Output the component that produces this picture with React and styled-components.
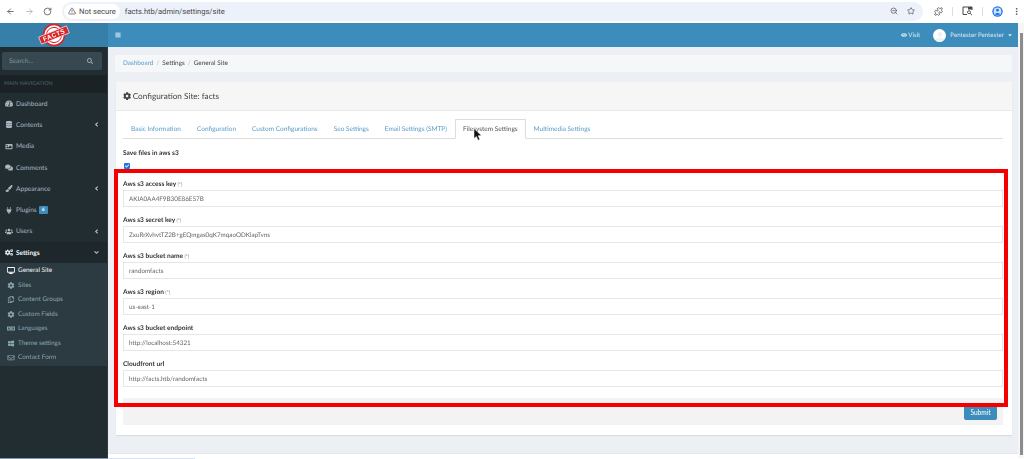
import React from "react";
import styled, { createGlobalStyle } from "styled-components";
import {
  FaTachometerAlt,
  FaDatabase,
  FaImage,
  FaComments,
  FaPaintBrush,
  FaPlug,
  FaUsers,
  FaCogs,
  FaDesktop,
  FaCog,
  FaRegCopy,
  FaLanguage,
  FaWindows,
  FaRegEnvelope,
  FaBars,
  FaEye,
  FaSearch,
  FaAngleLeft,
  FaAngleDown,
  FaCaretDown,
  FaUser,
  FaCheck,
} from "react-icons/fa";
import {
  LuArrowLeft,
  LuArrowRight,
  LuRotateCw,
  LuTriangleAlert,
  LuZoomOut,
  LuStar,
  LuPuzzle,
  LuEllipsisVertical,
} from "react-icons/lu";

const GlobalStyle = createGlobalStyle`
  html, body {
    margin: 0;
    padding: 0;
    background: #fff;
    overflow: hidden;
  }
  * { box-sizing: border-box; }
`;

const navItems = [
  { icon: FaTachometerAlt, label: "Dashboard" },
  { icon: FaDatabase, label: "Contents", arrow: true },
  { icon: FaImage, label: "Media" },
  { icon: FaComments, label: "Comments" },
  { icon: FaPaintBrush, label: "Appearance", arrow: true },
  { icon: FaPlug, label: "Plugins", badge: "6" },
  { icon: FaUsers, label: "Users", arrow: true },
  { icon: FaCogs, label: "Settings", active: true, open: true },
];

const subItems = [
  { icon: FaDesktop, label: "General Site", active: true },
  { icon: FaCog, label: "Sites" },
  { icon: FaRegCopy, label: "Content Groups" },
  { icon: FaCog, label: "Custom Fields" },
  { icon: FaLanguage, label: "Languages" },
  { icon: FaWindows, label: "Theme settings" },
  { icon: FaRegEnvelope, label: "Contact Form" },
];

const tabs = [
  "Basic Information",
  "Configuration",
  "Custom Configurations",
  "Seo Settings",
  "Email Settings (SMTP)",
  "Filesystem Settings",
  "Multimedia Settings",
];

const fields = [
  { label: "Aws s3 access key", value: "AKIA0AA4F9B30E86E57B", required: true },
  { label: "Aws s3 secret key", value: "ZxuRrXvhvtTZ2B+gEQmgas0qK7mqaoODKlapTvns", required: true },
  { label: "Aws s3 bucket name", value: "randomfacts", required: true },
  { label: "Aws s3 region", value: "us-east-1", required: true },
  { label: "Aws s3 bucket endpoint", value: "http://localhost:54321" },
  { label: "Cloudfront url", value: "http://facts.htb/randomfacts" },
];

const Logo = () => (
  <svg width="32" height="24" viewBox="0 0 32 24">
    <circle cx="16" cy="12" r="10.5" fill="#fff" stroke="#d8232a" strokeWidth="1.6" />
    <circle cx="16" cy="12" r="7.6" fill="none" stroke="#d8232a" strokeWidth="1" />
    <g transform="rotate(-22 16 12)">
      <rect x="1" y="8.2" width="30" height="7.6" fill="#d8232a" stroke="#fff" strokeWidth="0.6" />
      <text
        x="16"
        y="14.2"
        textAnchor="middle"
        fontFamily="Liberation Sans, sans-serif"
        fontWeight="700"
        fontSize="6.4"
        letterSpacing="0.5"
        fill="#fff"
      >
        FACTS
      </text>
    </g>
  </svg>
);

const Cursor = () => (
  <svg width="9" height="13" viewBox="0 0 9 13">
    <path d="M1 0.5 L1 10.5 L3.4 8.4 L5 12.2 L6.8 11.4 L5.2 7.8 L8.4 7.6 Z" fill="#111" stroke="#fff" strokeWidth="0.5" />
  </svg>
);

const ProfileIcon = () => (
  <svg width="11" height="11" viewBox="0 0 11 11">
    <circle cx="5.5" cy="5.5" r="5.2" fill="#1a73e8" />
    <circle cx="5.5" cy="5.5" r="3.9" fill="#d6e4fb" />
    <circle cx="5.5" cy="4.2" r="1.4" fill="#1a73e8" />
    <path d="M2.9 8.2 C3.6 6.5 7.4 6.5 8.1 8.2 C7 9.3 4 9.3 2.9 8.2 Z" fill="#1a73e8" />
  </svg>
);

const SidePanelIcon = () => (
  <svg width="11" height="10" viewBox="0 0 11 10" fill="none" stroke="#474747">
    <path d="M5 8.5 H1 V1 H10 V4" strokeWidth="1" />
    <rect x="6" y="1" width="4" height="2.5" fill="#474747" stroke="none" />
    <circle cx="7" cy="6.2" r="1.5" strokeWidth="0.9" />
    <path d="M8.2 7.4 L10 9.2" strokeWidth="0.9" />
  </svg>
);

export default function App() {
  return (
    <Page>
      <GlobalStyle />
      <BrowserBar>
        <BarIcon $left={2} $color="#474747"><LuArrowLeft /></BarIcon>
        <BarIcon $left={10} $color="#a9a9a9"><LuArrowRight /></BarIcon>
        <BarIcon $left={9} $color="#474747"><LuRotateCw /></BarIcon>
        <Omnibox>
          <SecureChip>
            <LuTriangleAlert />
            Not secure
          </SecureChip>
          <Url>facts.htb/admin/settings/site</Url>
          <OmniIcons>
            <LuZoomOut />
            <LuStar />
          </OmniIcons>
        </Omnibox>
        <BarActions>
          <LuPuzzle />
          <Divider />
          <SidePanelIcon />
          <Divider />
          <ProfileIcon />
          <LuEllipsisVertical />
        </BarActions>
      </BrowserBar>

      <Viewport>
        <AppColumn>
          <TopBar>
            <LogoBox><Logo /></LogoBox>
            <Navbar>
              <FaBars />
              <NavRight>
                <VisitLink><FaEye />Visit</VisitLink>
                <Avatar><FaUser /></Avatar>
                <UserName>Pentester Pentester</UserName>
                <FaCaretDown />
              </NavRight>
            </Navbar>
          </TopBar>

          <Body>
            <Sidebar>
              <SearchStrip>
                <SearchBox>
                  Search...
                  <FaSearch />
                </SearchBox>
              </SearchStrip>
              <NavHeader>MAIN NAVIGATION</NavHeader>
              {navItems.map(({ icon: Icon, label, arrow, badge, active, open }) => (
                <NavItem key={label} $active={active}>
                  <Icon />
                  <span>{label}</span>
                  {badge && <Badge>{badge}</Badge>}
                  {arrow && <Arrow><FaAngleLeft /></Arrow>}
                  {open && <Arrow><FaAngleDown /></Arrow>}
                </NavItem>
              ))}
              <SubMenu>
                {subItems.map(({ icon: Icon, label, active }) => (
                  <SubItem key={label} $active={active}>
                    <Icon />
                    <span>{label}</span>
                  </SubItem>
                ))}
              </SubMenu>
            </Sidebar>

            <Main>
              <Content>
                <Breadcrumb>
                  <CrumbLink>Dashboard</CrumbLink>
                  <CrumbSep>/</CrumbSep>
                  <span>Settings</span>
                  <CrumbSep>/</CrumbSep>
                  <span>General Site</span>
                </Breadcrumb>

                <Panel>
                  <PanelHeading>
                    <FaCog />
                    Configuration Site: facts
                  </PanelHeading>
                  <PanelBody>
                    <TabList>
                      {tabs.map((tab, i) => (
                        <Tab key={tab} $active={i === 5}>{tab}</Tab>
                      ))}
                    </TabList>
                    <CheckGroup>
                      <FieldLabel>Save files in aws s3</FieldLabel>
                      <CheckBox><FaCheck /></CheckBox>
                    </CheckGroup>
                    {fields.map((field) => (
                      <FieldGroup key={field.label}>
                        <FieldLabel>
                          {field.label}
                          {field.required && <Required> (*)</Required>}
                        </FieldLabel>
                        <TextField>{field.value}</TextField>
                      </FieldGroup>
                    ))}
                    <FormFooter>
                      <SubmitButton>Submit</SubmitButton>
                    </FormFooter>
                  </PanelBody>
                </Panel>
              </Content>
              <MainFooter />
            </Main>
          </Body>
        </AppColumn>
        <Scrollbar>
          <ScrollThumb />
        </Scrollbar>
      </Viewport>

      <BottomStrip>
        <StripDark />
        <StripLight />
      </BottomStrip>

      <Highlight />
      <CursorMark><Cursor /></CursorMark>
    </Page>
  );
}

const Page = styled.div`
  position: relative;
  display: flex;
  flex-direction: column;
  width: 1024px;
  height: 459px;
  overflow: hidden;
  font-family: "Lato", "Noto Sans", sans-serif;
  color: #333;
  text-rendering: geometricPrecision;
  filter: blur(0.3px);
`;

const BrowserBar = styled.div`
  display: flex;
  align-items: center;
  height: 23px;
  padding: 0 0 1px 4px;
  background: #fff;
  flex: none;
`;

const BarIcon = styled.span`
  display: flex;
  margin-left: ${(p) => p.$left}px;
  color: ${(p) => p.$color};
  font-size: 9px;
`;

const Omnibox = styled.div`
  display: flex;
  align-items: center;
  width: 861px;
  height: 19px;
  margin-left: 10px;
  padding: 0 6px 0 2px;
  border-radius: 10px;
  background: #edf2fa;
`;

const SecureChip = styled.div`
  display: flex;
  align-items: center;
  gap: 3px;
  height: 15px;
  padding: 0 4px;
  border-radius: 8px;
  background: #fff;
  font-family: "Roboto", sans-serif;
  font-size: 7.6px;
  color: #474747;
  svg { font-size: 8px; }
`;

const Url = styled.span`
  margin-left: 5px;
  font-family: "Roboto", sans-serif;
  font-size: 7.6px;
  color: #474747;
`;

const OmniIcons = styled.div`
  display: flex;
  gap: 9px;
  margin-left: auto;
  padding-right: 2px;
  color: #474747;
  font-size: 8px;
`;

const BarActions = styled.div`
  display: flex;
  align-items: center;
  gap: 9px;
  margin-left: 11px;
  color: #474747;
  font-size: 9px;
`;

const Divider = styled.span`
  width: 1px;
  height: 9px;
  background: #d5dfee;
`;

const Viewport = styled.div`
  display: flex;
  flex: 1;
  min-height: 0;
`;

const AppColumn = styled.div`
  display: flex;
  flex-direction: column;
  flex: 1;
  min-width: 0;
`;

const TopBar = styled.header`
  display: flex;
  height: 24px;
  flex: none;
`;

const LogoBox = styled.div`
  display: flex;
  align-items: center;
  justify-content: center;
  width: 108px;
  background: #367fa9;
`;

const Navbar = styled.div`
  display: flex;
  align-items: center;
  justify-content: space-between;
  flex: 1;
  padding: 0 5px 0 7px;
  background: #3c8dbc;
  color: #fff;
  font-size: 6px;
`;

const NavRight = styled.div`
  display: flex;
  align-items: center;
  color: #d8e8f2;
  font-size: 6.2px;
  svg { font-size: 6px; }
`;

const VisitLink = styled.span`
  display: flex;
  align-items: center;
  gap: 1px;
  margin-right: 13px;
`;

const Avatar = styled.span`
  display: flex;
  align-items: flex-end;
  justify-content: center;
  width: 13px;
  height: 13px;
  margin-right: 4px;
  border-radius: 50%;
  background: #fff;
  overflow: hidden;
  color: #eef1f3;
  svg { font-size: 10px; }
`;

const UserName = styled.span`
  margin-right: 3px;
`;

const Body = styled.div`
  display: flex;
  flex: 1;
  min-height: 0;
`;

const Sidebar = styled.aside`
  width: 108px;
  flex: none;
  background: #222d32;
  border-right: 1px solid #2f3b41;
`;

const SearchStrip = styled.div`
  height: 28px;
  padding: 5px 5px 5px 2px;
`;

const SearchBox = styled.div`
  display: flex;
  align-items: center;
  justify-content: space-between;
  height: 18px;
  padding: 0 9px 0 7px;
  border-radius: 2px;
  background: #374850;
  color: #7f949e;
  font-size: 6.6px;
  svg { font-size: 6px; color: #9aa9b0; }
`;

const NavHeader = styled.div`
  display: flex;
  align-items: center;
  height: 18px;
  padding-left: 4px;
  background: #1a2226;
  color: #4b646f;
  font-size: 5.4px;
`;

const NavItem = styled.div`
  display: flex;
  align-items: center;
  height: 21.3px;
  padding: 0 8px 0 5px;
  background: ${(p) => (p.$active ? "#1e282c" : "transparent")};
  color: ${(p) => (p.$active ? "#f2f5f6" : "#a9b9c1")};
  font-size: 6.6px;
  font-weight: ${(p) => (p.$active ? 700 : 400)};
  svg { width: 8px; font-size: 7px; margin-right: 3px; flex: none; }
`;

const Badge = styled.span`
  margin-left: 2px;
  padding: 1.5px 3px;
  border-radius: 1px;
  background: #3c8dbc;
  color: #fff;
  font-size: 5px;
  font-weight: 700;
  line-height: 5px;
`;

const Arrow = styled.span`
  display: flex;
  margin-left: auto;
  svg { width: 5px; margin: 0; color: #b8c7ce; }
`;

const SubMenu = styled.div`
  padding: 0 0 1px;
  background: #2c3b41;
`;

const SubItem = styled.div`
  display: flex;
  align-items: center;
  height: 14.5px;
  padding-left: 7px;
  color: ${(p) => (p.$active ? "#f2f5f6" : "#8aa4af")};
  font-size: 6.4px;
  svg { width: 8px; font-size: 7px; margin-right: 3px; flex: none; }
`;

const Main = styled.main`
  display: flex;
  flex-direction: column;
  flex: 1;
  min-width: 0;
  background: #ecf0f5;
`;

const Content = styled.div`
  flex: 1;
  padding: 8px 6px 0 7px;
`;

const MainFooter = styled.div`
  height: 5px;
  flex: none;
  background: #fff;
  border-top: 1px solid #e4e8ee;
`;

const Breadcrumb = styled.div`
  display: flex;
  align-items: center;
  height: 17px;
  padding: 0 8px;
  border-radius: 2px;
  background: #f5f7f9;
  color: #444;
  font-size: 6.4px;
`;

const CrumbLink = styled.span`
  color: #5c9cc6;
`;

const CrumbSep = styled.span`
  margin: 0 3px;
  color: #b5b5b5;
`;

const Panel = styled.section`
  height: 353px;
  margin: 10px 0 0 1px;
  background: #fff;
  box-shadow: 0 1px 1px rgba(0, 0, 0, 0.08);
`;

const PanelHeading = styled.div`
  display: flex;
  align-items: center;
  gap: 1.5px;
  height: 29px;
  padding: 0 7px;
  background: #f6f6f6;
  border-bottom: 1px solid #e8e8e8;
  color: #444;
  font-size: 8.2px;
`;

const PanelBody = styled.div`
  padding: 8px 9px 0 7px;
`;

const TabList = styled.div`
  display: flex;
  height: 20px;
  border-bottom: 1px solid #ddd;
`;

const Tab = styled.div`
  display: flex;
  align-items: center;
  height: 20px;
  padding: 0 7px;
  color: ${(p) => (p.$active ? "#555" : "#5c9cc6")};
  background: ${(p) => (p.$active ? "#fff" : "transparent")};
  border: 1px solid ${(p) => (p.$active ? "#ddd" : "transparent")};
  border-bottom-color: ${(p) => (p.$active ? "#fff" : "transparent")};
  font-size: 6.5px;
`;

const CheckGroup = styled.div`
  margin-top: 9px;
`;

const CheckBox = styled.div`
  display: flex;
  align-items: center;
  justify-content: center;
  width: 6px;
  height: 6px;
  margin: 5px 0 0 1px;
  border-radius: 1px;
  background: #1a73e8;
  color: #fff;
  svg { font-size: 4px; }
`;

const FieldGroup = styled.div`
  height: 36px;
  padding-top: 10px;
`;

const FieldLabel = styled.div`
  height: 10px;
  margin-bottom: 1px;
  color: #333;
  font-size: 6.6px;
  font-weight: 700;
  line-height: 10px;
`;

const Required = styled.span`
  color: #888;
  font-size: 5px;
  font-weight: 400;
`;

const TextField = styled.div`
  display: flex;
  align-items: center;
  height: 17px;
  padding: 1px 5px 0;
  background: #fff;
  border: 1px solid #e6e6e6;
  color: #666;
  font-size: 6.3px;
`;

const FormFooter = styled.div`
  display: flex;
  justify-content: flex-end;
  align-items: center;
  height: 27px;
  margin-top: 13px;
  padding-right: 6px;
  background: #f3f3f3;
`;

const SubmitButton = styled.button`
  width: 33px;
  height: 16px;
  padding: 0;
  border: none;
  border-radius: 2px;
  background: #3c8dbc;
  color: #fff;
  font-family: inherit;
  font-size: 6.6px;
`;

const Scrollbar = styled.div`
  width: 6px;
  flex: none;
  padding: 10px 1px 0 2px;
  background: #f6f6f6;
`;

const ScrollThumb = styled.div`
  height: 422px;
  background: #8c8c8c;
`;

const BottomStrip = styled.div`
  display: flex;
  height: 1px;
  flex: none;
  background: #fff;
`;

const StripDark = styled.div`
  width: 108px;
  background: #8496ab;
`;

const StripLight = styled.div`
  width: 87px;
  background: #d5e0f2;
`;

const Highlight = styled.div`
  position: absolute;
  left: 114px;
  top: 169px;
  width: 894px;
  height: 238px;
  border: 4px solid #f40000;
  pointer-events: none;
`;

const CursorMark = styled.div`
  position: absolute;
  left: 473px;
  top: 128px;
  line-height: 0;
`;
